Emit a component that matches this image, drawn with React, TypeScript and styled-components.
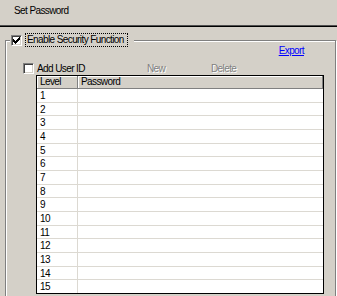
import React from 'react';
import styled, { createGlobalStyle } from 'styled-components';

const GlobalStyle = createGlobalStyle`
  html, body {
    margin: 0;
    padding: 0;
    overflow: hidden;
    background: #d4d0c8;
  }
  body {
    font-family: 'Liberation Sans', Arial, sans-serif;
    font-size: 10px;
    letter-spacing: -0.6px;
    color: #000;
  }
`;

const Page = styled.div`
  width: 337px;
  height: 296px;
  background: #d4d0c8;
`;

const Title = styled.div`
  padding: 5px 0 8px 14px;
  line-height: 12px;
`;

const Divider = styled.div`
  height: 0;
  border-top: 1px solid #505050;
  border-bottom: 1px solid #000;
`;

const GroupBox = styled.fieldset`
  margin: 6px 1px 0 5px;
  padding: 0 0 40px 0;
  border: 1px solid #808080;
  box-shadow: inset 1px 1px 0 #fff, 1px 1px 0 #fff;
`;

const GroupLegend = styled.legend`
  display: flex;
  align-items: center;
  margin-left: 4px;
  padding: 0 6px 0 1px;
  height: 14px;
  background: #d4d0c8;
`;

const Box = styled.span`
  box-sizing: border-box;
  width: 11px;
  height: 11px;
  flex: none;
  display: flex;
  align-items: center;
  justify-content: center;
  background: #fff;
  border: 1px solid;
  border-color: #808080 #fff #fff #808080;
  box-shadow: inset 1px 1px 0 #404040, inset -1px -1px 0 #d4d0c8;
`;

const FocusLabel = styled.span`
  margin-left: 3px;
  padding: 0 3px 0 1px;
  line-height: 12px;
  border: 1px dotted #000;
`;

const ExportRow = styled.div`
  display: flex;
  justify-content: flex-end;
  margin-top: -1px;
  padding-right: 31px;
  line-height: 10px;
`;

const LinkText = styled.a`
  color: #0000ff;
  text-decoration: underline;
  cursor: pointer;
`;

const ToolRow = styled.div`
  display: flex;
  align-items: center;
  height: 11px;
  margin-top: 7px;
  padding-left: 17px;
`;

const ToolLabel = styled.span`
  width: 110px;
  margin-left: 3px;
  line-height: 10px;
`;

const Disabled = styled.span<{ $w: number }>`
  width: ${p => p.$w}px;
  line-height: 10px;
  color: #808080;
  text-shadow: 1px 1px 0 #fff;
`;

const Table = styled.div`
  margin: 1px 11px 0 30px;
  height: 219px;
  box-sizing: border-box;
  border: 1px solid #000;
  background: #fff;
  display: flex;
  flex-direction: column;
`;

const HeaderRow = styled.div`
  display: grid;
  grid-template-columns: 41px 1fr;
  height: 13px;
  flex: none;
`;

const HeaderCell = styled.div`
  box-sizing: border-box;
  padding-left: 3px;
  line-height: 12px;
  background: #d4d0c8;
  border-right: 1px solid #808080;
  border-bottom: 1px solid #808080;
  box-shadow: inset 1px 1px 0 #fff;
`;

const Body = styled.div`
  flex: 1;
  display: flex;
  flex-direction: column;
`;

const Row = styled.div`
  flex: 1;
  display: grid;
  grid-template-columns: 41px 1fr;
  border-bottom: 1px solid #dcd9d2;
  &:last-child {
    border-bottom: none;
  }
`;

const Cell = styled.div`
  display: flex;
  align-items: center;
  padding-left: 3px;
  &:first-child {
    border-right: 1px solid #dcd9d2;
  }
`;

const Check = () => (
  <svg width="7" height="7" viewBox="0 0 7 7" shapeRendering="crispEdges">
    <path
      d="M0 2h1v3H0z M1 3h1v3H1z M2 4h1v3H2z M3 3h1v3H3z M4 2h1v3H4z M5 1h1v3H5z M6 0h1v3H6z"
      fill="#000"
    />
  </svg>
);

const levels = Array.from({ length: 15 }, (_, i) => i + 1);

export default function App() {
  return (
    <Page>
      <GlobalStyle />
      <Title>Set Password</Title>
      <Divider />
      <GroupBox>
        <GroupLegend>
          <Box>
            <Check />
          </Box>
          <FocusLabel>Enable Security Function</FocusLabel>
        </GroupLegend>
        <ExportRow>
          <LinkText>Export</LinkText>
        </ExportRow>
        <ToolRow>
          <Box />
          <ToolLabel>Add User ID</ToolLabel>
          <Disabled $w={64}>New</Disabled>
          <Disabled $w={40}>Delete</Disabled>
        </ToolRow>
        <Table>
          <HeaderRow>
            <HeaderCell>Level</HeaderCell>
            <HeaderCell>Password</HeaderCell>
          </HeaderRow>
          <Body>
            {levels.map(n => (
              <Row key={n}>
                <Cell>{n}</Cell>
                <Cell />
              </Row>
            ))}
          </Body>
        </Table>
      </GroupBox>
    </Page>
  );
}
